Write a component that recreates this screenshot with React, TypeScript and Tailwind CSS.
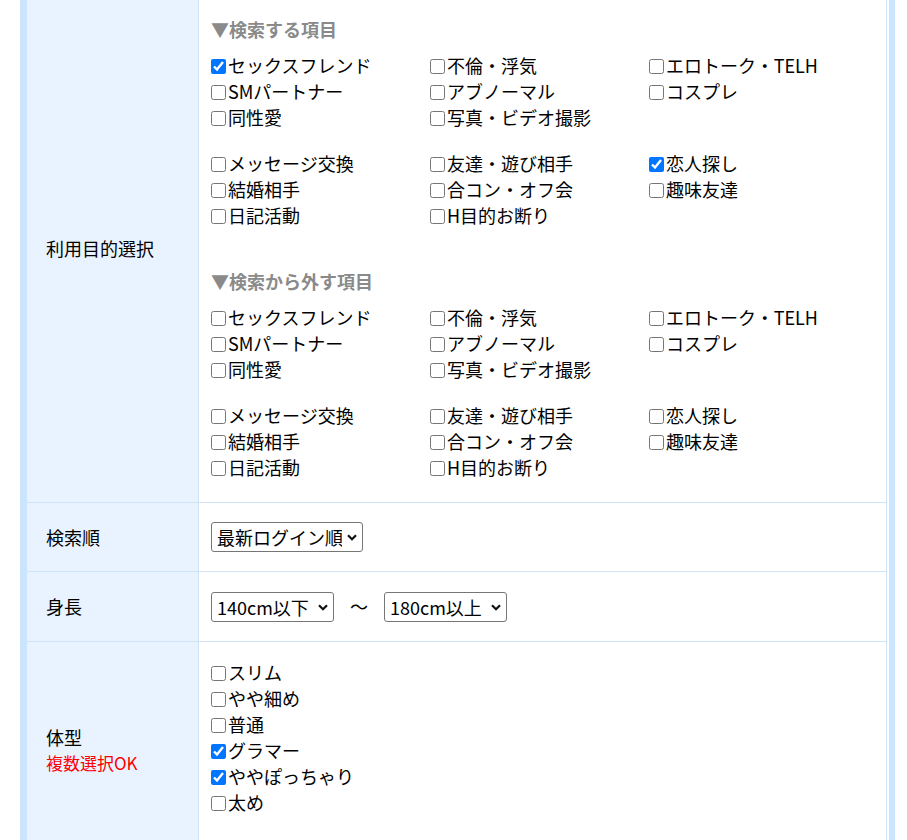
import React from 'react'

const FONT = '"Noto Sans CJK JP", "Noto Sans", sans-serif'

type Opt = { label: string; checked?: boolean }

const groupA: Opt[] = [
  { label: 'セックスフレンド' },
  { label: '不倫・浮気' },
  { label: 'エロトーク・TELH' },
  { label: 'SMパートナー' },
  { label: 'アブノーマル' },
  { label: 'コスプレ' },
  { label: '同性愛' },
  { label: '写真・ビデオ撮影' },
]

const groupB: Opt[] = [
  { label: 'メッセージ交換' },
  { label: '友達・遊び相手' },
  { label: '恋人探し' },
  { label: '結婚相手' },
  { label: '合コン・オフ会' },
  { label: '趣味友達' },
  { label: '日記活動' },
  { label: 'H目的お断り' },
]

const bodyTypes: Opt[] = [
  { label: 'スリム' },
  { label: 'やや細め' },
  { label: '普通' },
  { label: 'グラマー', checked: true },
  { label: 'ややぽっちゃり', checked: true },
  { label: '太め' },
]

const Check: React.FC<Opt> = ({ label, checked }) => (
  <label className="flex items-center h-[26px] whitespace-nowrap cursor-pointer">
    <input
      type="checkbox"
      defaultChecked={checked}
      className="m-0 mr-[2px] w-[15px] h-[15px] shrink-0 mt-[2px]"
    />
    <span>{label}</span>
  </label>
)

const CheckGrid: React.FC<{ items: Opt[]; checkedLabels?: string[] }> = ({
  items,
  checkedLabels = [],
}) => (
  <div className="grid grid-cols-[219px_219px_219px]">
    {items.map((o) => (
      <Check key={o.label} label={o.label} checked={checkedLabels.includes(o.label)} />
    ))}
  </div>
)

const Heading: React.FC<{ children: React.ReactNode }> = ({ children }) => (
  <div className="h-[26px] leading-[24px] font-bold text-[#8a8a8a]">{children}</div>
)

const Select: React.FC<{ value: string; width: string }> = ({ value, width }) => (
  <div className={`relative ${width}`}>
    <select
      defaultValue={value}
      className="appearance-none w-full h-[30px] border border-[#767676] rounded-[3px] bg-white pl-[5px] pr-[20px] text-[18px] leading-[28px] text-black outline-none"
      style={{ fontFamily: FONT }}
    >
      <option>{value}</option>
    </select>
    <svg
      className="absolute right-[6px] top-[12px] pointer-events-none"
      width="10"
      height="7"
      viewBox="0 0 10 7"
    >
      <path d="M1 1.2 L5 5.2 L9 1.2" fill="none" stroke="#111" strokeWidth="2.2" />
    </svg>
  </div>
)

const Row: React.FC<{
  label: React.ReactNode
  children: React.ReactNode
  last?: boolean
  contentClass?: string
}> = ({ label, children, last, contentClass = '' }) => (
  <div className={`flex ${last ? '' : 'border-b border-[#cfe3f7]'}`}>
    <div className="w-[172px] shrink-0 bg-[#e8f3ff] border-r border-[#cfe3f7] pl-[19px] flex items-center">
      <div>{label}</div>
    </div>
    <div className={`flex-1 pl-[12px] ${contentClass}`}>{children}</div>
  </div>
)

export default function App() {
  return (
    <div
      className="bg-white min-h-screen overflow-hidden text-[18px] text-black"
      style={{ fontFamily: FONT }}
    >
      <div className="ml-[20px] w-[875px] -mt-[6px] border-l-[7px] border-r-[6px] border-[#cce5ff] pr-[2px] bg-white">
        <div className="border-r border-[#cfe3f7]">
          <Row label="利用目的選択" contentClass="pt-[23px] pb-[22px]">
            <Heading>▼検索する項目</Heading>
            <div className="mt-[9px]">
              <CheckGrid items={groupA} checkedLabels={['セックスフレンド']} />
            </div>
            <div className="mt-[20px]">
              <CheckGrid items={groupB} checkedLabels={['恋人探し']} />
            </div>
            <div className="mt-[41px]">
              <Heading>▼検索から外す項目</Heading>
            </div>
            <div className="mt-[9px]">
              <CheckGrid items={groupA} />
            </div>
            <div className="mt-[20px]">
              <CheckGrid items={groupB} />
            </div>
          </Row>

          <Row label="検索順" contentClass="h-[68px] flex items-center">
            <Select value="最新ログイン順" width="w-[152px]" />
          </Row>

          <Row label="身長" contentClass="h-[69px] flex items-center">
            <Select value="140cm以下" width="w-[123px]" />
            <span className="mx-[16px]">～</span>
            <Select value="180cm以上" width="w-[123px]" />
          </Row>

          <Row
            last
            label={
              <>
                <div className="leading-[26px]">体型</div>
                <div className="leading-[26px] text-[17px] text-[#ff0000]">複数選択OK</div>
              </>
            }
            contentClass="pt-[17px] pb-[43px]"
          >
            {bodyTypes.map((o) => (
              <Check key={o.label} label={o.label} checked={o.checked} />
            ))}
          </Row>
        </div>
      </div>
    </div>
  )
}
